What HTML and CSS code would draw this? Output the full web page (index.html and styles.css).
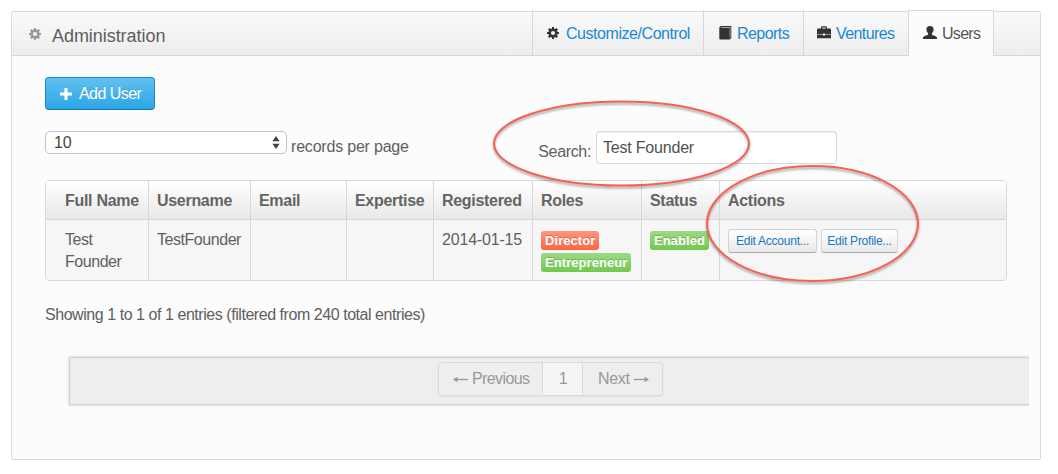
FILE: index.html
```html
<!DOCTYPE html>
<html lang="en">
<head>
<meta charset="utf-8">
<title>Administration</title>
<link rel="stylesheet" href="styles.css">
</head>
<body>
<svg class="defs" width="0" height="0">
  <symbol id="gear" viewBox="0 0 12 12">
    <path fill="currentColor" fill-rule="evenodd" d="M5 0h2v1.500l1.200.5 1.200-1L11 2.600 10 3.800l.5 1.200H12v2h-1.500L10 8.200l1 1.200L9.400 11l-1.200-1-1.200.5V12H5v-1.500L3.800 10l-1.200 1L1 9.400l1-1.200L1.500 7H0V5h1.500L2 3.800 1 2.600 2.600 1l1.200 1L5 1.500zM6 3.900a2.100 2.100 0 1 0 0 4.200 2.100 2.100 0 0 0 0-4.200z"/>
  </symbol>
</svg>
<main class="panel">
  <header class="panel-head">
    <svg class="head-icon" width="12" height="12"><use href="#gear"/></svg>
    <h1 class="title">Administration</h1>
    <nav class="tabs">
      <a class="tab customize"><svg class="ico" width="12" height="12"><use href="#gear"/></svg><span>Customize/Control</span></a>
      <a class="tab reports"><svg class="ico" width="13" height="14" viewBox="0 0 13 14"><path fill="#333" d="M2.500 0H12.300V11.500L10.800 13.500H1.500Q.3 13.500.3 12.300V2Q.3 0 2.500 0z"/><path fill="#aaa" d="M1.500 2L3 1H11.500V11L10.600 12V2z"/></svg><span>Reports</span></a>
      <a class="tab ventures"><svg class="ico" width="14" height="13" viewBox="0 0 14 13"><path fill="#333" d="M4 2.500V1.500Q4 .3 5.200.3H8.800Q10 .3 10 1.500V2.500H13Q14 2.500 14 3.500V8.200H8.200V7.400H5.800V8.200H0V3.500Q0 2.500 1 2.500zM5.200 2.500H8.800V1.500H5.200zM0 8.800H5.800V9.400H8.200V8.800H14V12.300H0z"/></svg><span>Ventures</span></a>
      <a class="tab users"><svg class="ico" width="14" height="13" viewBox="0 0 14 13"><path fill="#333" d="M7 0C9.500 0 10.600 1.300 10.600 3.200 10.600 5 9.800 6.300 8.900 7.200V8.600C9.700 9.700 14 10 14 12V13H0V12C0 10 4.300 9.700 5.100 8.600V7.200C4.200 6.300 3.400 5 3.400 3.200 3.400 1.300 4.500 0 7 0z"/></svg><span>Users</span></a>
    </nav>
  </header>
  <section class="content">
    <button class="add"><svg width="12" height="12" viewBox="0 0 12 12"><path fill="#fff" d="M4.500 0h3v4.500H12v3H7.500V12h-3V7.500H0v-3h4.500z"/></svg><span>Add User</span></button>
    <div class="filters">
      <div class="length">
        <div class="select"><span>10</span><svg width="8" height="13" viewBox="0 0 8 13"><path fill="#444" d="M4 0L7.600 5.300H.4zM4 13L7.600 7.700H.4z"/></svg></div>
        <span class="per-page">records per page</span>
      </div>
      <div class="search"><label for="q">Search:</label><input id="q" type="text" value="Test Founder"></div>
    </div>
    <div class="table">
      <div class="row head">
        <div>Full Name</div><div>Username</div><div>Email</div><div>Expertise</div><div>Registered</div><div>Roles</div><div>Status</div><div>Actions</div>
      </div>
      <div class="row body">
        <div>Test<br>Founder</div><div>TestFounder</div><div></div><div></div><div class="date">2014-01-15</div>
        <div class="labels"><span class="label red">Director</span><span class="label">Entrepreneur</span></div>
        <div class="labels"><span class="label">Enabled</span></div>
        <div class="actions"><button class="mini">Edit Account...</button><button class="mini">Edit Profile...</button></div>
      </div>
    </div>
    <p class="info">Showing 1 to 1 of 1 entries (filtered from 240 total entries)</p>
    <div class="well-clip">
      <div class="well">
        <div class="pager">
          <span class="page prev"><svg width="15" height="8" viewBox="0 0 15 8"><path fill="none" stroke="#999" stroke-width="1.300" d="M1 4.500H15"/><path fill="#999" d="M0 4.500L4.500 1.700V7.300z"/></svg>Previous</span>
          <span class="page current">1</span>
          <span class="page next">Next<svg width="15" height="8" viewBox="0 0 15 8"><path fill="none" stroke="#999" stroke-width="1.300" d="M0 4.500H14"/><path fill="#999" d="M15 4.500L10.500 1.700V7.300z"/></svg></span>
        </div>
      </div>
    </div>
  </section>
</main>
<svg class="marks" width="1058" height="474" viewBox="0 0 1058 474">
  <ellipse cx="621.500" cy="143.500" rx="127.500" ry="42"/>
  <ellipse cx="812.500" cy="223.500" rx="105.500" ry="57.500"/>
</svg>
</body>
</html>
```
FILE: styles.css
```css
* { box-sizing: border-box; }
body { margin: 0; background: #fff; color: #606060; font: 16px/22px "Liberation Sans", Arial, sans-serif; letter-spacing: -.45px; width: 1058px; height: 474px; overflow: hidden; position: relative; padding: 11px; }
.defs { position: absolute; }
.panel { width: 1030px; height: 449px; border: 1px solid #dadada; border-radius: 2px; background: #fcfcfc; }
.panel-head { height: 44px; display: flex; border-bottom: 1px solid #d8d8d8; background: linear-gradient(#fafafa, #ededed); padding-left: 17px; }
.head-icon { color: #999; margin-top: 16px; flex: none; }
.title { margin: 13px 0 0 11px; font-size: 18px; line-height: 22px; font-weight: 400; letter-spacing: -.05px; color: #5e5e5e; }
.tabs { display: flex; margin: -2px 46px 0 auto; height: 46px; }
.tab { display: flex; border-left: 1px solid #d8d8d8; padding: 13px 0 0 14px; color: #1a89d2; }
.ico { color: #333; flex: none; margin-top: 3px; }
.customize .ico { margin-top: 4px; }
.tab span { margin-left: 7px; white-space: nowrap; }
.customize { width: 171px; }
.reports { width: 100px; padding-left: 15px; letter-spacing: -.55px; }
.reports span { margin-left: 5px; }
.ventures { width: 105px; padding-left: 13px; letter-spacing: -.6px; }
.ventures span, .users span { margin-left: 5px; }
.users { width: 86px; border: 1px solid #d8d8d8; border-bottom: 0; background: #fcfcfc; color: #555; letter-spacing: -.7px; padding-top: 12px; }
.content { padding: 21px 33px 0; }
button { font-family: inherit; cursor: pointer; }
.add { display: flex; align-items: center; width: 110px; height: 33px; padding: 0 0 0 14px; border: 1px solid #1d8ccb; border-bottom-color: #1678b1; border-radius: 4px; background: linear-gradient(#62c0ef, #2ba6e6); color: #fff; font-size: 16px; line-height: 22px; letter-spacing: -.55px; gap: 7px; text-shadow: 0 -1px 0 rgba(0,0,0,.12); }
.filters { display: flex; justify-content: space-between; height: 49px; margin-top: 21px; padding-right: 170px; }
.length { display: flex; gap: 4px; letter-spacing: -.2px; }
.select { width: 242px; height: 23px; border: 1px solid #c4c4c4; border-radius: 5px; background: #fff; display: flex; justify-content: space-between; align-items: center; padding: 0 6px 0 8px; color: #444; }
.per-page { margin-top: 5px; }
.search { display: flex; gap: 5px; }
.search label { margin-top: 10px; letter-spacing: -.35px; }
.search input { width: 241px; height: 33px; border: 1px solid #d8d8d8; border-radius: 3px; background: #fff; box-shadow: inset 0 1px 1px rgba(0,0,0,.06); font: inherit; letter-spacing: -.2px; color: #505050; padding: 1px 6px 0; }
.table { width: 962px; height: 101px; border: 1px solid #d8d8d8; border-radius: 4px; overflow: hidden; }
.row { display: grid; grid-template-columns: 102px 102px 96px 87px 99px 109px 78px 1fr; }
.row > div { padding: 9px 0 0 8px; border-left: 1px solid #d8d8d8; }
.row > div:first-child { padding-left: 19px; border-left: 0; }
.head { height: 39px; border-bottom: 1px solid #d8d8d8; background: linear-gradient(#fff, #e8e8e8); font-weight: 700; letter-spacing: -.3px; color: #646464; }
.body { height: 60px; background: #f6f6f6; }
.date { letter-spacing: -.18px; }
.row > .labels { display: flex; flex-direction: column; align-items: flex-start; gap: 3px; padding-top: 11px; }
.label { height: 19px; border-radius: 3px; padding: 0 4px; background: linear-gradient(#9cdb84, #72c84e); color: #fff; font-size: 13px; line-height: 19px; font-weight: 700; letter-spacing: .07px; text-shadow: 0 -1px 0 rgba(0,0,0,.2); }
.red { background: linear-gradient(#ff967d, #ff6441); }
.row > .actions { display: flex; gap: 4px; padding-top: 9px; }
.mini { height: 24px; border: 1px solid #d4d4d4; border-bottom-color: #aaa; border-radius: 3px; background: linear-gradient(#fff, #e9e9e9); color: #1677c4; font-size: 12px; padding: 0; width: 89px; letter-spacing: -.25px; white-space: nowrap; }
.mini + .mini { width: 77px; }
.info { margin: 23px 0 0; }
.well-clip { overflow: hidden; margin: 27px -22px 0 20px; padding: 4px 0 6px 4px; }
.well { height: 48px; margin-right: -10px; border: 1px solid #d0d0d0; background: #eee; box-shadow: 0 0 3px rgba(0,0,0,.2); padding: 4px 0 0 368px; }
.pager { display: flex; width: 225px; height: 34px; color: #999; box-shadow: 0 1px 2px rgba(0,0,0,.05); border-radius: 4px; }
.page { display: flex; align-items: center; border: 1px solid #dadada; letter-spacing: -.6px; }
.prev { width: 105px; border-radius: 4px 0 0 4px; gap: 4px; padding-left: 14px; }
.current { width: 40px; background: #f5f5f5; border-left-color: #f5f5f5; justify-content: center; }
.next { width: 80px; border-left: 0; border-radius: 0 4px 4px 0; gap: 4px; padding-left: 15px; letter-spacing: -.3px; }
/* Hand-drawn callouts sit above the page */
.marks { position: absolute; left: 0; top: 0; pointer-events: none; filter: drop-shadow(0 2px 1px rgba(0,0,0,.35)); }
.marks ellipse { fill: none; stroke: #f95f52; stroke-width: 2; }
```
